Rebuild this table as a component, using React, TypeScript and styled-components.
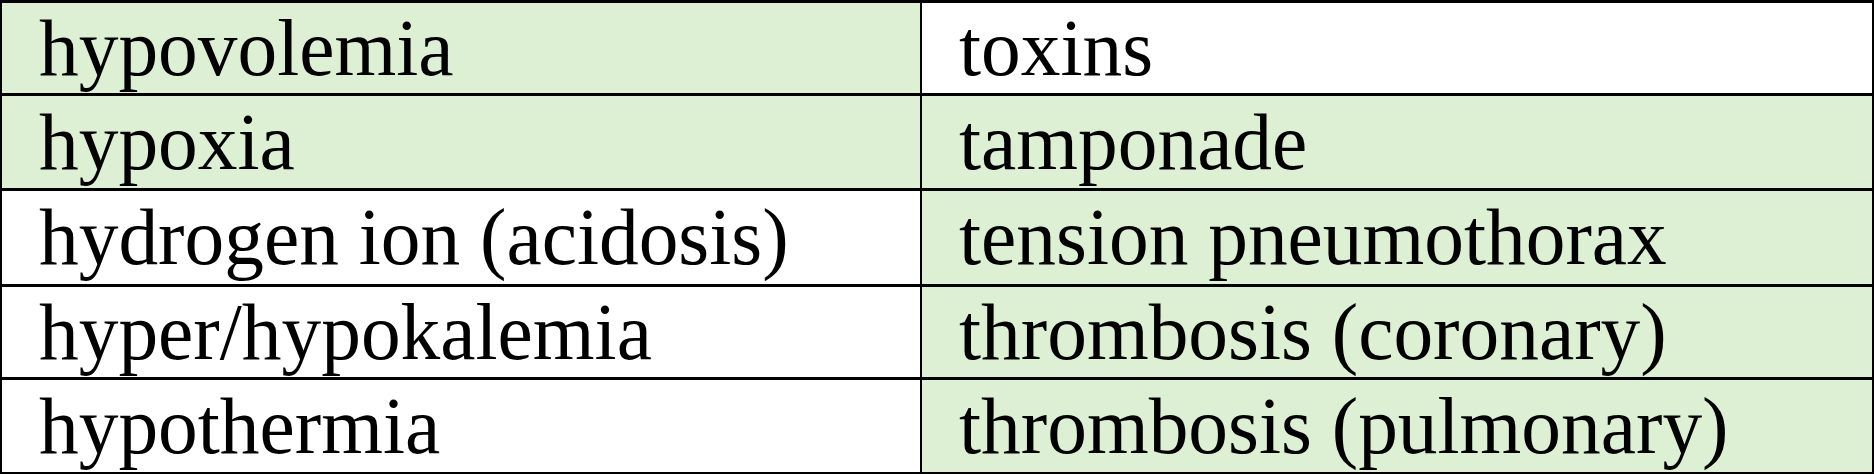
import React from "react";
import styled, { createGlobalStyle } from "styled-components";

const Global = createGlobalStyle`
  html, body { margin: 0; padding: 0; background: #ffffff; }
  #root { width: 1874px; height: 474px; }
`;

const Table = styled.div`
  display: grid;
  grid-template-columns: 918px 950px;
  grid-template-rows: 90px 92px 93px 90px 92px;
  column-gap: 2px;
  row-gap: 3px;
  padding: 3px 2px 2px 2px;
  width: 1874px;
  height: 474px;
  box-sizing: border-box;
  background: #000000;
`;

const Cell = styled.div<{ $green: boolean }>`
  display: flex;
  align-items: center;
  padding-left: 37px;
  background: ${(p) => (p.$green ? "#ddf0d4" : "#ffffff")};
  font-family: "Liberation Serif", "Times New Roman", serif;
  font-size: 79.4px;
  line-height: 91px;
  color: #000000;
  white-space: nowrap;
  overflow: hidden;
`;

const rows: [string, boolean, string, boolean][] = [
  ["hypovolemia", true, "toxins", false],
  ["hypoxia", true, "tamponade", true],
  ["hydrogen ion (acidosis)", false, "tension pneumothorax", true],
  ["hyper/hypokalemia", false, "thrombosis (coronary)", true],
  ["hypothermia", false, "thrombosis (pulmonary)", true],
];

export default function App() {
  return (
    <>
      <Global />
      <Table>
        {rows.map(([a, ga, b, gb]) => (
          <React.Fragment key={a}>
            <Cell $green={ga}>{a}</Cell>
            <Cell $green={gb}>{b}</Cell>
          </React.Fragment>
        ))}
      </Table>
    </>
  );
}
